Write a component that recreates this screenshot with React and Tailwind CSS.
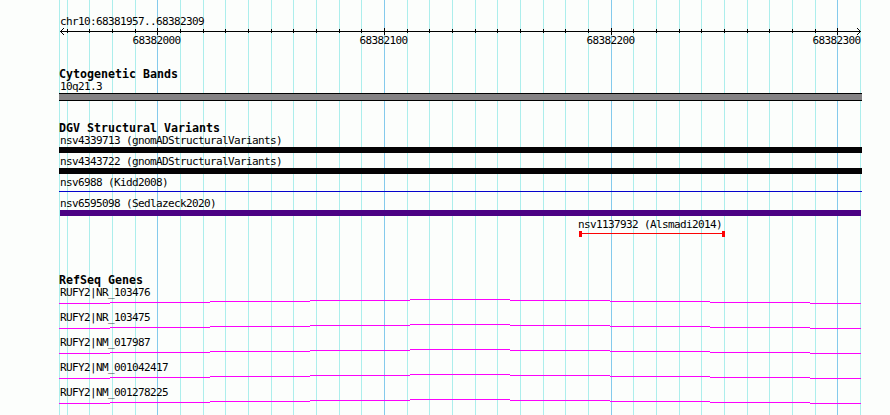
import React from 'react';

const GRID_LINES = [
  59, 67, 89, 112, 135, 157, 180, 203, 225, 248, 271, 293, 316, 339, 361, 384, 407, 429, 452, 475,
  497, 520, 543, 565, 588, 611, 633, 656, 679, 701, 724, 747, 769, 792, 815, 837, 860
];

const MAJOR_TICKS = [
  { x: 157, label: '68382000' },
  { x: 384, label: '68382100' },
  { x: 611, label: '68382200' },
  { x: 837, label: '68382300' }
];

const VARIANTS = [
  { name: 'nsv4339713 (gnomADStructuralVariants)', bar: 'mt-[1px] h-1.5 w-[803px] bg-[#040204]' },
  { name: 'nsv4343722 (gnomADStructuralVariants)', bar: 'mt-[1px] h-1.5 w-[803px] bg-[#040204]' },
  { name: 'nsv6988 (Kidd2008)', bar: 'mt-[3px] h-px w-[803px] bg-[#0402cc]' },
  { name: 'nsv6595098 (Sedlazeck2020)', bar: 'mt-[1px] ml-px h-1.5 w-[801px] bg-[#4c0284]' }
];

const GENES = ['RUFY2|NR_103476', 'RUFY2|NR_103475', 'RUFY2|NM_017987', 'RUFY2|NM_001042417', 'RUFY2|NM_001278225'];

const isMajor = x => MAJOR_TICKS.some(tick => tick.x === x);

const GridLines = () => {
  return <svg className="absolute inset-0" width="890" height="415" shapeRendering="crispEdges">
      {GRID_LINES.map(x => <rect key={x} x={x} y="0" width="1" height="415" fill={isMajor(x) ? '#84caec' : '#aceeec'} />)}
    </svg>;
};

const TrackTitle = ({ children }) => {
  return <h2 className="h-3 whitespace-pre text-[11.63px] leading-3 font-bold">{children}</h2>;
};

const Label = ({ children }) => {
  return <p className="ml-px h-3 whitespace-pre text-[11px] leading-[14px] tracking-[-0.622px]">{children}</p>;
};

const Ruler = () => {
  return <svg className="-ml-[59px] block" width="890" height="22">
      <g shapeRendering="crispEdges">
        <rect x="60" y="4" width="801" height="1" />
        {GRID_LINES.slice(1, -1).map(x => isMajor(x)
          ? <rect key={x} x={x} y="1" width="1" height="7" />
          : <rect key={x} x={x} y="2" width="1" height="4" />)}
        {[1, 2, 3].map(i => <g key={i}>
            <rect x={60 + i} y={4 - i} width="1" height="1" />
            <rect x={60 + i} y={4 + i} width="1" height="1" />
            <rect x={860 - i} y={4 - i} width="1" height="1" />
            <rect x={860 - i} y={4 + i} width="1" height="1" />
          </g>)}
      </g>
      {MAJOR_TICKS.map(({ x, label }) => <text key={x} x={x - 24.5} y="17" className="text-[11px] tracking-[-0.622px]">{label}</text>)}
    </svg>;
};

const GeneRow = ({ name }) => {
  return <div className="h-[25px]">
      <Label>{name}</Label>
      <svg className="mt-px block" width="803" height="6" shapeRendering="crispEdges">
        <path
          d="M0 4.5H51M51 3.5H151M151 2.5H251M251 1.5H351M351 .5H451M451 1.5H551M551 2.5H651M651 3.5H751M751 4.5H802"
          stroke="#fc02fc"
          fill="none"
        />
      </svg>
    </div>;
};

export default function App() {
  return <div className="relative h-[415px] w-[890px] overflow-hidden bg-[#fcfefc] font-['DejaVu_Sans_Mono',monospace] text-black">
      <GridLines />
      <main className="relative pt-[15px] pl-[59px]">
        <Label>chr10:68381957..68382309</Label>
        <div className="h-[41px]">
          <Ruler />
        </div>
        <section className="h-[54px]">
          <TrackTitle>Cytogenetic Bands</TrackTitle>
          <Label>10q21.3</Label>
          <div className="mt-[1px] h-2 w-[803px] border-y border-black bg-[#848284]" />
        </section>
        <section className="h-[152px]">
          <TrackTitle>DGV Structural Variants</TrackTitle>
          {VARIANTS.map(({ name, bar }) => <div key={name} className="h-[21px]">
              <Label>{name}</Label>
              <div className={bar} />
            </div>)}
          <div className="ml-[518px]">
            <Label>nsv1137932 (Alsmadi2014)</Label>
            <div className="mt-[1px] ml-[2px] flex h-1.5 w-[146px] items-center">
              <span className="h-1.5 w-[3px] bg-[#fc0204]" />
              <span className="mb-px h-px flex-1 bg-[#fc0204]" />
              <span className="h-1.5 w-[3px] bg-[#fc0204]" />
            </div>
          </div>
        </section>
        <section>
          <TrackTitle>RefSeq Genes</TrackTitle>
          {GENES.map(name => <GeneRow key={name} name={name} />)}
        </section>
      </main>
    </div>;
}
